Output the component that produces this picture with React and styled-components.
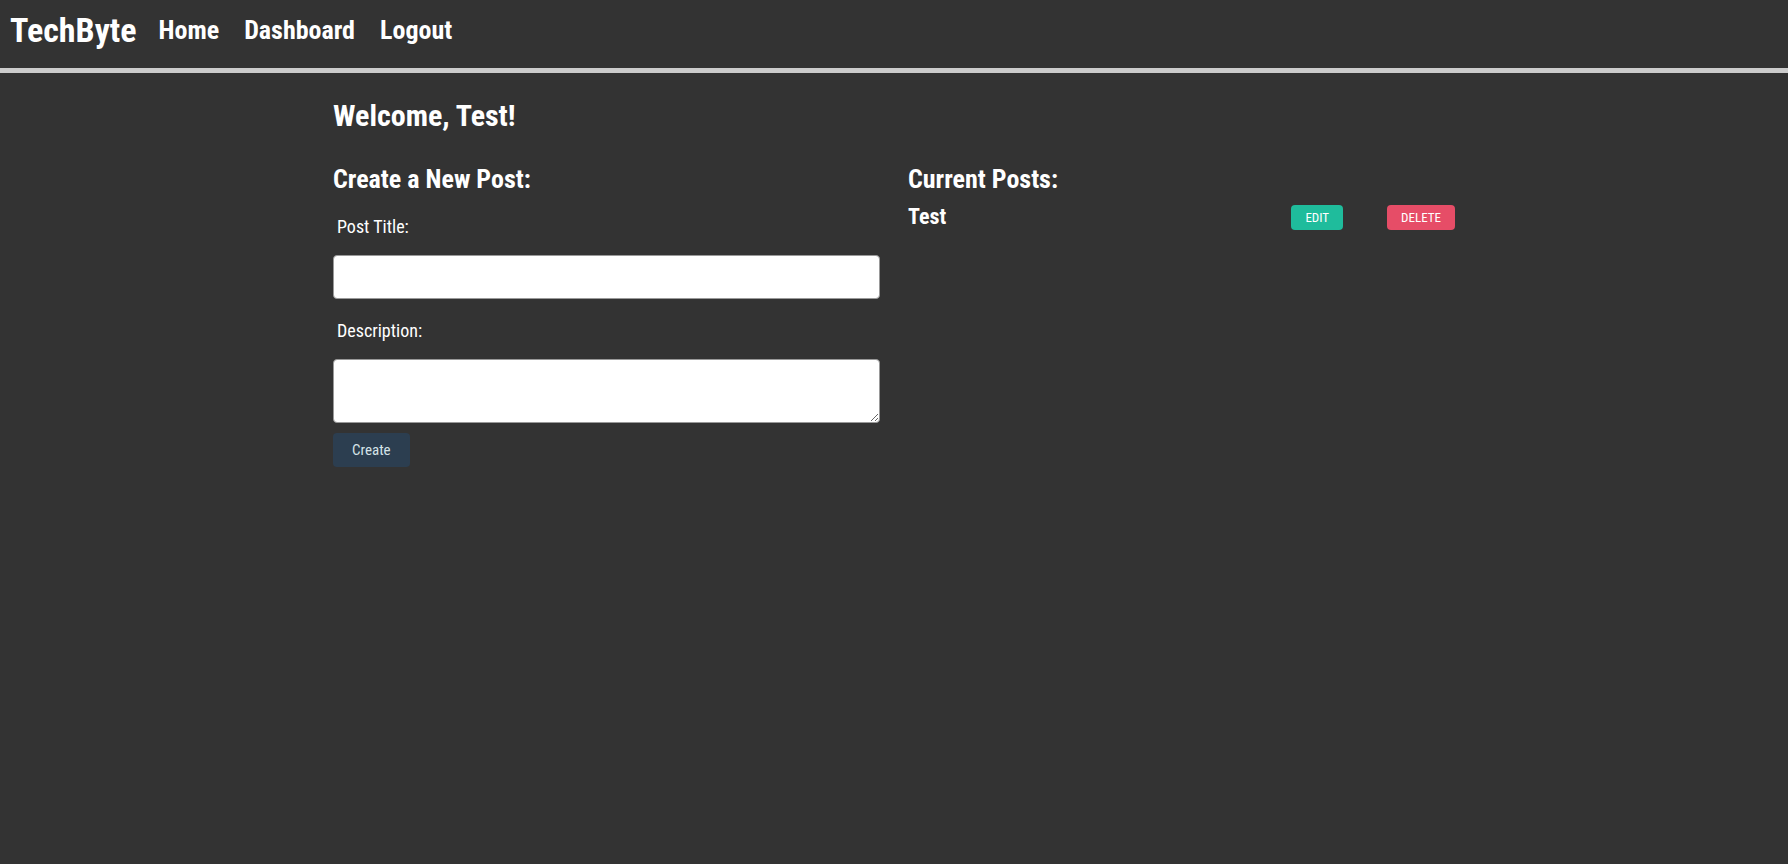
import React from 'react';
import styled, { createGlobalStyle } from 'styled-components';

const GlobalStyle = createGlobalStyle`
  * { box-sizing: border-box; }
  body {
    margin: 0;
    background: #333;
    color: #fff;
    font-family: 'Roboto Condensed', 'Liberation Sans Narrow', Roboto, sans-serif;
    font-size: 18px;
  }
  button, input, textarea { font-family: inherit; }
`;

const Header = styled.header`
  display: flex;
  align-items: center;
  gap: 22px;
  height: 73px;
  padding: 0 10px 8px;
  border-bottom: 5px solid #ccc;
`;

const Brand = styled.h1`
  margin: 0;
  font-size: 34px;
  line-height: 40px;
`;

const Nav = styled.nav`
  display: flex;
  gap: 25px;
`;

const NavLink = styled.a`
  color: inherit;
  font-size: 26px;
  font-weight: 700;
  line-height: 32px;
  text-decoration: none;
`;

const Main = styled.main`
  max-width: 1122px;
  margin: 0 auto;
  padding-top: 25px;
`;

const Welcome = styled.h2`
  margin: 0 0 29px;
  font-size: 30px;
  line-height: 36px;
`;

const Columns = styled.div`
  display: grid;
  grid-template-columns: 1fr 1fr;
  gap: 28px;
`;

const SectionTitle = styled.h3`
  margin: 0;
  font-size: 26px;
  line-height: 32px;
`;

const Form = styled.form`
  display: flex;
  flex-direction: column;
  align-items: flex-start;
`;

const Label = styled.label`
  padding: 20px 4px 16px;
  line-height: 24px;
`;

const TextInput = styled.input`
  width: 100%;
  height: 44px;
  padding: 8px;
  border: 1px solid #999;
  border-radius: 4px;
  background: #fff;
  font-size: 18px;
`;

const TextArea = styled.textarea`
  width: 100%;
  height: 64px;
  margin-bottom: 10px;
  padding: 8px;
  border: 1px solid #999;
  border-radius: 4px;
  background: #fff;
  font-size: 18px;
  resize: both;
`;

const CreateButton = styled.button`
  height: 34px;
  padding: 0 19px;
  border: 0;
  border-radius: 4px;
  background: #2c3e50;
  color: #d5e3e8;
  font-size: 15px;
`;

const PostRow = styled.div`
  display: flex;
  align-items: center;
  justify-content: space-between;
  height: 44px;
`;

const PostName = styled.h4`
  margin: 0;
  font-size: 22px;
  line-height: 28px;
`;

const Actions = styled.div`
  display: flex;
  gap: 44px;
`;

const ActionButton = styled.button`
  height: 25px;
  padding: 0 14px;
  border: 0;
  border-radius: 4px;
  background: ${(p) => (p.$danger ? '#e64d67' : '#1fbc9c')};
  color: #fff;
  font-size: 13px;
  text-transform: uppercase;
`;

const posts = ['Test'];

export default function App() {
  return (
    <>
      <GlobalStyle />
      <Header>
        <Brand>TechByte</Brand>
        <Nav>
          <NavLink href="#home">Home</NavLink>
          <NavLink href="#dashboard">Dashboard</NavLink>
          <NavLink href="#logout">Logout</NavLink>
        </Nav>
      </Header>
      <Main>
        <Welcome>Welcome, Test!</Welcome>
        <Columns>
          <section>
            <SectionTitle>Create a New Post:</SectionTitle>
            <Form onSubmit={(e) => e.preventDefault()}>
              <Label htmlFor="post-title">Post Title:</Label>
              <TextInput id="post-title" type="text" />
              <Label htmlFor="post-desc">Description:</Label>
              <TextArea id="post-desc" />
              <CreateButton type="submit">Create</CreateButton>
            </Form>
          </section>
          <section>
            <SectionTitle>Current Posts:</SectionTitle>
            {posts.map((name) => (
              <PostRow key={name}>
                <PostName>{name}</PostName>
                <Actions>
                  <ActionButton type="button">Edit</ActionButton>
                  <ActionButton type="button" $danger>Delete</ActionButton>
                </Actions>
              </PostRow>
            ))}
          </section>
        </Columns>
      </Main>
    </>
  );
}
